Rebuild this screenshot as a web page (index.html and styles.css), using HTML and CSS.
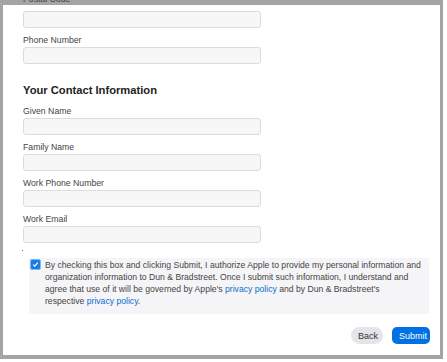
FILE: index.html
```html
<!DOCTYPE html>
<html lang="en">
  <head>
    <meta charset="UTF-8" />
    <meta name="viewport" content="width=device-width, initial-scale=1.0" />
    <title>Your Contact Information</title>
    <link rel="stylesheet" href="styles.css">
  </head>
  <body>
    <div class="window">
      <div class="field field-first">
        <label for="postalCode">Postal Code</label>
        <input type="text" id="postalCode" />
      </div>
      <div class="field">
        <label for="phoneNumber">Phone Number</label>
        <input type="text" id="phoneNumber" />
      </div>

      <h2>Your Contact Information</h2>

      <div class="field">
        <label for="givenName">Given Name</label>
        <input type="text" id="givenName" />
      </div>
      <div class="field">
        <label for="familyName">Family Name</label>
        <input type="text" id="familyName" />
      </div>
      <div class="field">
        <label for="workPhone">Work Phone Number</label>
        <input type="text" id="workPhone" />
      </div>
      <div class="field">
        <label for="workEmail">Work Email</label>
        <input type="text" id="workEmail" />
      </div>

      <div class="error-dot"></div>

      <div class="consent">
        <span class="checkbox">
          <svg width="7" height="7" viewBox="0 0 7 7">
            <path d="M1.2 3.6 L2.8 5.2 L5.8 1.6" fill="none" stroke="#ffffff" stroke-width="1.2" />
          </svg>
        </span>
        <p>
          By checking this box and clicking Submit, I authorize Apple to provide my personal information and
          organization information to Dun &amp; Bradstreet. Once I submit such information, I understand and
          agree that use of it will be governed by Apple's <a href="#">privacy policy</a> and by Dun &amp; Bradstreet's
          respective&nbsp;<a href="#">privacy policy</a>.
        </p>
      </div>

      <div class="actions">
        <button class="btn-back">Back</button>
        <button class="btn-submit">Submit</button>
      </div>
    </div>
  </body>
</html>
```

FILE: styles.css
```css
body {
  margin: 0;
  background-color: #ffffff;
  font-family: "Liberation Sans", Arial, sans-serif;
  color: #333;
}

.window {
  box-sizing: border-box;
  width: 443px;
  height: 359px;
  padding: 0 10px 0 20px;
  border: 3px solid #a4a4a4;
  border-top-width: 5px;
  border-bottom-width: 4px;
  background-color: #ffffff;
}

.field {
  display: flex;
  flex-direction: column;
  gap: 1px;
  margin-bottom: 7px;
}

.field-first {
  margin-top: -11px;
  gap: 6px;
}

label {
  font-size: 8.7px;
  line-height: 11px;
  color: #444;
}

input {
  box-sizing: border-box;
  width: 238px;
  height: 17px;
  margin: 0;
  border: 1px solid #dcdcdc;
  border-radius: 3px;
  background-color: #f7f7f7;
}

h2 {
  margin: 19px 0 8px;
  font-size: 11.2px;
  line-height: 15px;
  font-weight: bold;
  color: #222;
}

.error-dot {
  width: 1px;
  height: 1px;
  margin-left: -1px;
  background-color: #e8303a;
}

.consent {
  display: flex;
  gap: 4px;
  height: 56px;
  box-sizing: border-box;
  margin: 7px 1px 0 6px;
  padding: 1px 3px 6px 1px;
  background-color: #f5f5f7;
}

.checkbox {
  flex: none;
  display: flex;
  align-items: center;
  justify-content: center;
  box-sizing: border-box;
  width: 11px;
  height: 11px;
  border: 1.5px solid #7fb8f2;
  border-radius: 2px;
  background-color: #1a7ae8;
}

.consent p {
  margin: 0;
  font-size: 8.65px;
  line-height: 12px;
  color: #444;
}

.consent a {
  color: #0a6fce;
  text-decoration: none;
}

.actions {
  display: flex;
  justify-content: flex-end;
  gap: 9px;
  margin-top: 13px;
}

button {
  height: 17px;
  padding: 0 7px;
  border: none;
  font-family: "Liberation Sans", Arial, sans-serif;
  font-size: 9px;
  cursor: pointer;
}

.btn-back {
  width: 32px;
  border-radius: 9px;
  background-color: #e4e4e9;
  color: #333;
}

.btn-submit {
  width: 38px;
  border-radius: 5px;
  background-color: #0071e3;
  color: #ffffff;
}
```
